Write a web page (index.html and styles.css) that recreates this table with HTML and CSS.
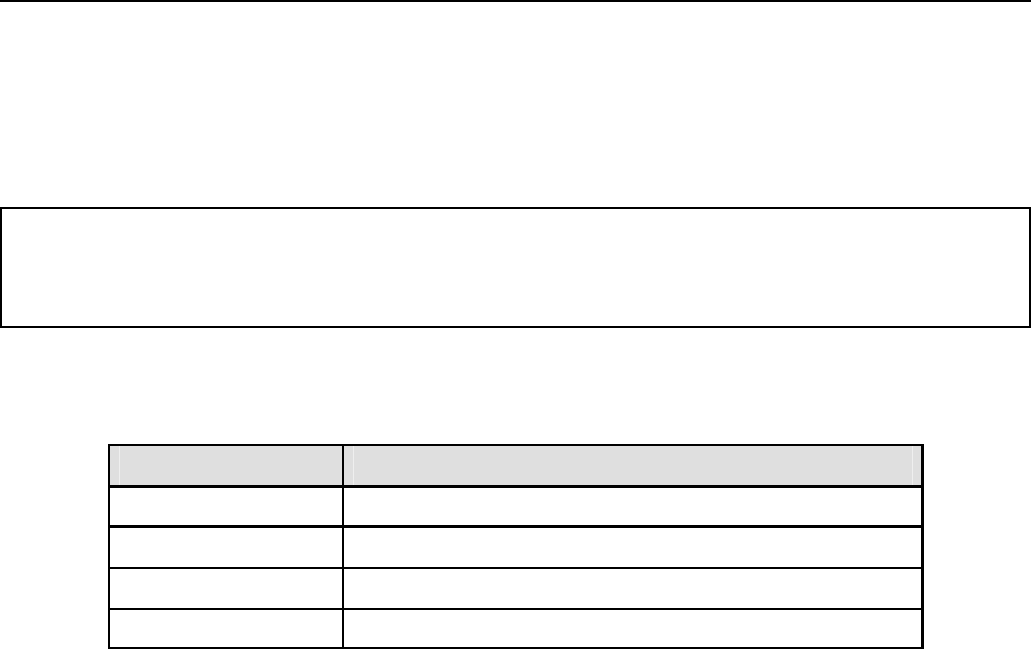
FILE: index.html
```html
<!DOCTYPE html>
<html lang="en">
<head>
<meta charset="utf-8">
<title>Document page</title>
<link rel="stylesheet" href="styles.css">
</head>
<body>
<div class="page">
  <div class="rule"></div>
  <div class="frame"></div>
  <div class="grid-table">
    <div class="row head">
      <div class="cell c1"></div>
      <div class="cell c2"></div>
    </div>
    <div class="row r1">
      <div class="cell c1"></div>
      <div class="cell c2"></div>
    </div>
    <div class="row r2">
      <div class="cell c1"></div>
      <div class="cell c2"></div>
    </div>
    <div class="row r3">
      <div class="cell c1"></div>
      <div class="cell c2"></div>
    </div>
    <div class="row r4">
      <div class="cell c1"></div>
      <div class="cell c2"></div>
    </div>
  </div>
</div>
</body>
</html>
```

FILE: styles.css
```css
html, body {
  margin: 0;
  padding: 0;
  background: #ffffff;
  font-family: "Liberation Sans", Arial, sans-serif;
}

.page {
  width: 1032px;
  height: 649px;
  overflow: hidden;
  display: flex;
  flex-direction: column;
}

.rule {
  width: 1031px;
  height: 2px;
  background: #000000;
}

.frame {
  margin-top: 205px;
  width: 1031px;
  height: 121px;
  box-sizing: border-box;
  border: 2px solid #000000;
}

.grid-table {
  margin-top: 116px;
  margin-left: 108px;
  width: 816px;
  box-sizing: border-box;
  border: 2px solid #000000;
  border-right-width: 3px;
  display: flex;
  flex-direction: column;
}

.row {
  display: flex;
}

.cell.c1 {
  width: 232px;
  border-right: 2px solid #000000;
}

.cell.c2 {
  flex: 1;
}

.head {
  height: 39px;
  border-bottom: 3px solid #000000;
}

.head .cell.c1 {
  background: linear-gradient(to right, #dfdfdf 9px, #efefef 9px, #efefef 10px, #dfdfdf 10px);
}

.head .cell.c2 {
  background: linear-gradient(to right, #dfdfdf 9px, #efefef 9px, #efefef 10px, #dfdfdf 10px, #dfdfdf calc(100% - 9px), #efefef calc(100% - 9px), #efefef calc(100% - 8px), #dfdfdf calc(100% - 8px));
}

.r1 {
  height: 37px;
  border-bottom: 3px solid #000000;
}

.r2 {
  height: 39px;
  border-bottom: 2px solid #000000;
}

.r3 {
  height: 39px;
  border-bottom: 2px solid #000000;
}

.r4 {
  height: 37px;
}
```
